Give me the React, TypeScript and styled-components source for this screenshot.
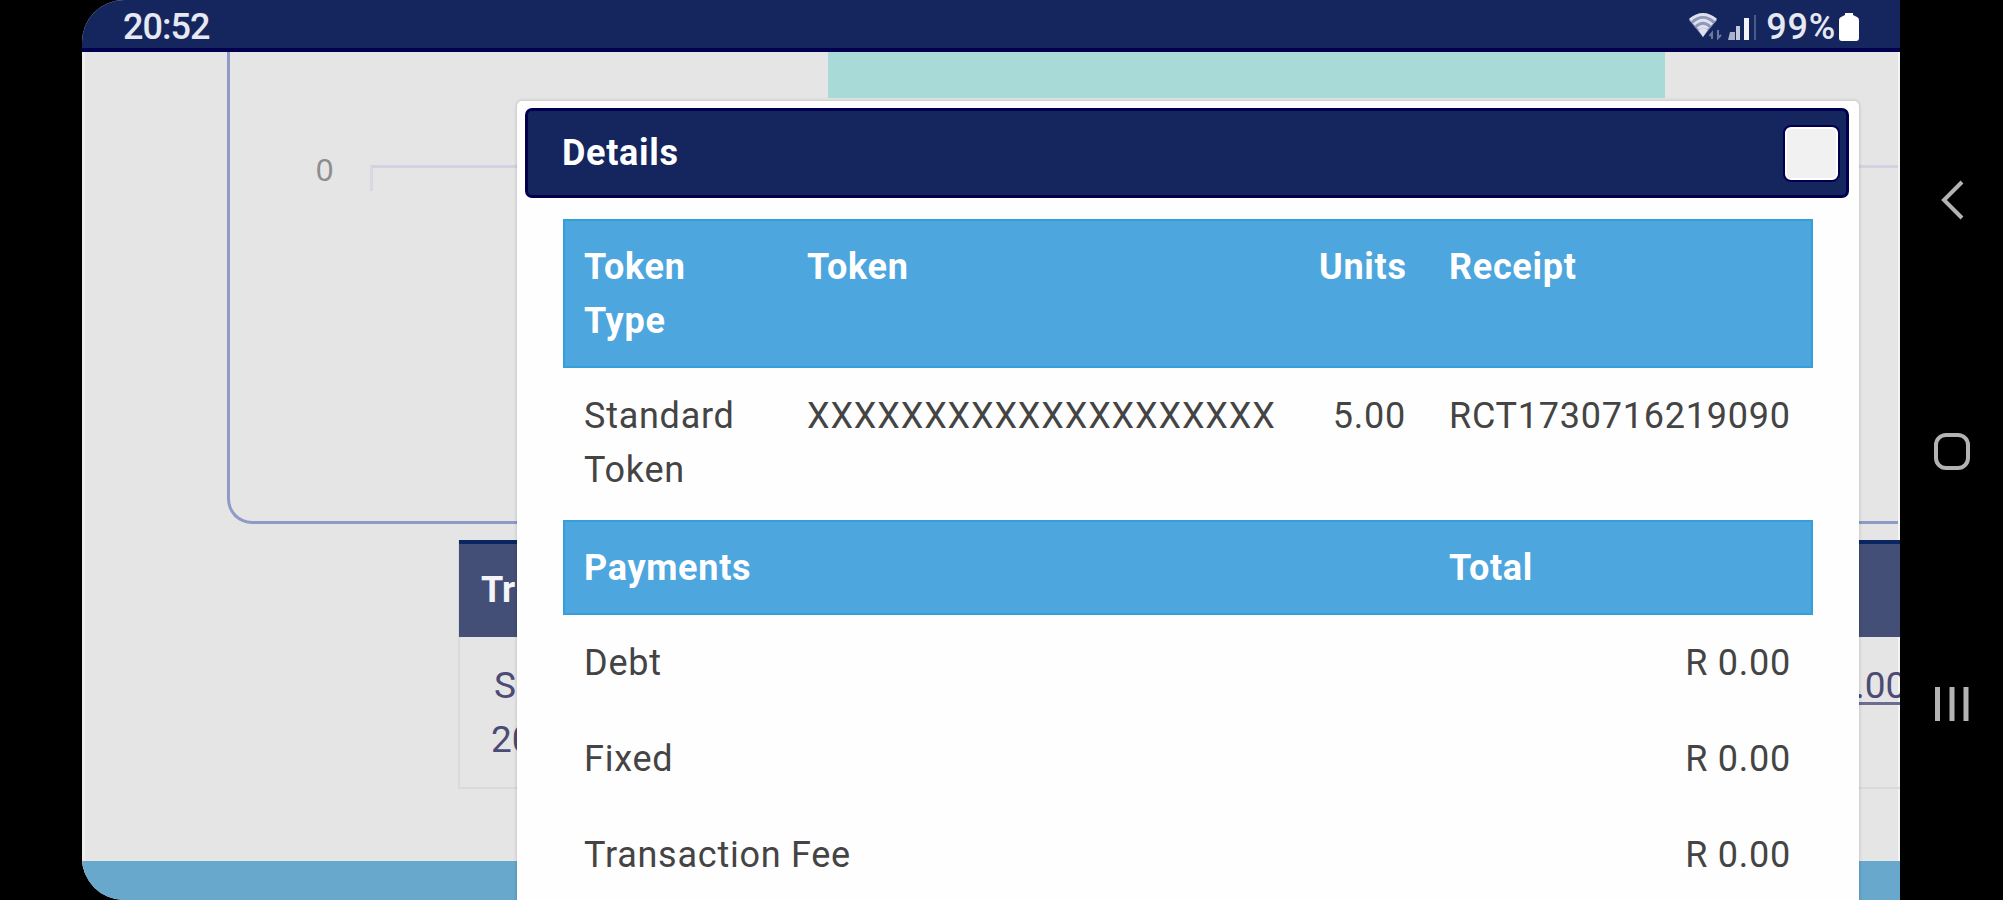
import styled, { createGlobalStyle } from 'styled-components';

const GlobalStyle = createGlobalStyle`
  * { box-sizing: border-box; }
  body {
    margin: 0;
    background: #000;
    font-family: Roboto, "Liberation Sans", sans-serif;
  }
`

const Device = styled.div`
  display: grid;
  grid-template-columns: 1818px 103px;
  padding-left: 82px;
  width: 2003px;
  height: 900px;
  overflow: hidden;
  background: #000;
`

const Screen = styled.div`
  position: relative;
  display: flex;
  flex-direction: column;
  height: 900px;
  overflow: hidden;
  background: #e5e5e5;
  border-radius: 42px 0 0 42px;
`

const StatusBar = styled.header`
  display: flex;
  flex: none;
  align-items: center;
  justify-content: space-between;
  height: 52px;
  padding: 5px 41px 0 41px;
  background: #15265f;
  border-bottom: 4px solid #00004f;
  color: #e6e8f2;
`

const Clock = styled.span`
  font-size: 36px;
  font-weight: 500;
  line-height: 46px;
  letter-spacing: -1px;
`

const StatusIcons = styled.div`
  display: flex;
  align-items: center;
`

const Percent = styled.span`
  font-size: 36px;
  font-weight: 500;
  line-height: 46px;
  letter-spacing: 0.8px;
  margin: 0 3px 0 8px;
`

const Page = styled.main`
  display: flex;
  flex: 1;
  flex-direction: column;
  border-left: 3px solid #eee;
  border-right: 2px solid #f4f4f4;
`

const ChartCard = styled.section`
  display: flex;
  flex: none;
  flex-direction: column;
  height: 472px;
  margin-left: 142px;
  border: solid #8f9ac6;
  border-width: 0 0 3px 3px;
  border-bottom-left-radius: 25px;
`

const Bar = styled.div`
  width: 837px;
  height: 46px;
  margin-left: 598px;
  background: #a8dad8;
`

const Axis = styled.div`
  display: flex;
  margin: 56px 0 0 86px;
`

const AxisLabel = styled.span`
  width: 54px;
  font-family: "Liberation Sans", sans-serif;
  font-size: 31px;
  line-height: 34px;
  color: #8d8d8d;
`

const AxisLine = styled.div`
  flex: 1;
  height: 26px;
  margin-top: 11px;
  border-top: 3px solid #d2d2e2;
  border-left: 3px solid #d8d8e2;
`

const History = styled.section`
  flex: none;
  width: 1600px;
  height: 249px;
  margin: 16px 0 0 373px;
  border: 2px solid #dadada;
  border-top: 0;
`

const HistoryHead = styled.div`
  height: 97px;
  margin-left: -1px;
  padding-left: 22px;
  background: #434f76;
  border-top: 4px solid #0a2560;
  color: #f3f5fa;
  font-size: 36px;
  font-weight: 700;
  line-height: 92px;
`

const HistoryRow = styled.div`
  display: flex;
  padding-top: 22px;
  color: #4b4b75;
  font-size: 37px;
  line-height: 54px;
`

const HistoryDate = styled.div`
  width: 1395px;
  padding-left: 31px;
  span { display: block; }
  span:first-child { padding-left: 3px; }
`

const HistoryAmount = styled.span`
  height: 46px;
  border-bottom: 3px solid #6a6d91;
`

const Footer = styled.footer`
  flex: none;
  height: 40px;
  margin: 72px -2px 0 -3px;
  background: #68a8cc;
`

const Modal = styled.div`
  position: absolute;
  top: 101px;
  left: 435px;
  width: 1342px;
  height: 820px;
  padding: 7px 10px 0 8px;
  background: #fefefe;
  border-radius: 5px 5px 0 0;
  box-shadow: 0 0 3px 1px rgba(0, 0, 0, 0.12);
`

const ModalHeader = styled.div`
  display: flex;
  align-items: center;
  justify-content: space-between;
  height: 90px;
  padding: 0 8px 0 34px;
  background: #15265f;
  border: 3px solid #00004f;
  border-radius: 7px;
`

const ModalTitle = styled.h2`
  margin: 0;
  color: #fff;
  font-size: 36px;
  font-weight: 700;
  line-height: 54px;
  letter-spacing: 0.7px;
`

const CloseButton = styled.button`
  width: 53px;
  height: 53px;
  padding: 0;
  background: #f1f1f1;
  border: 2px solid #fff;
  border-radius: 6px;
  box-shadow: 0 0 0 2px #00004f;
`

const Table = styled.table`
  width: 1250px;
  margin: 21px 0 0 38px;
  border-collapse: collapse;
  table-layout: fixed;
`

const Row = styled.tr<{ $head?: boolean; $height: number }>`
  height: ${p => p.$height}px;
  background: ${p => (p.$head ? '#4da6dd' : 'transparent')};
  box-shadow: ${p => (p.$head ? 'inset 0 0 0 2px #349fd8' : 'none')};
`

const Cell = styled.td<{ $right?: boolean; $spacing?: number }>`
  padding: 21px 22px 0 21px;
  vertical-align: top;
  text-align: ${p => (p.$right ? 'right' : 'left')};
  color: #444;
  font-size: 36px;
  font-weight: 400;
  line-height: 54px;
  letter-spacing: ${p => p.$spacing ?? 0.75}px;
  white-space: nowrap;
`

const HeadCell = styled(Cell).attrs({ as: 'th' })`
  color: #fff;
  font-weight: 700;
  letter-spacing: 0.7px;
`

const NavBar = styled.nav`
  display: flex;
  flex-direction: column;
  align-items: center;
  padding-top: 180px;
`

const NavIcon = styled.svg<{ $gap?: number }>`
  display: block;
  flex: none;
  margin-top: ${p => p.$gap ?? 0}px;
  fill: none;
  stroke: #b3b3b3;
  stroke-width: 4;
`

const payments = [
  { name: 'Debt', total: 'R 0.00' },
  { name: 'Fixed', total: 'R 0.00' },
  { name: 'Transaction Fee', total: 'R 0.00' },
]

const StatusGlyphs = () => (
  <svg width="70" height="30" viewBox="0 0 70 30">
    <path d="M1 8 Q15 -4 29 8 L15 25Z" fill="#8f98b8" />
    <g fill="none" stroke="#dfe2ee" strokeWidth="3">
      <path d="M2 8 Q15 -3 28 8" />
      <path d="M6 12.5 Q15 4 24 12.5" />
      <path d="M10 16.5 Q15 12 20 16.5" />
    </g>
    <path d="M10.5 18 L15 25 L19.5 18 Q15 14 10.5 18Z" fill="#dfe2ee" />
    <path d="M24 27v-6l-2.500 3M30 18v8l3-3" fill="none" stroke="#6d789f" strokeWidth="2" />
    <path d="M42 20h5v8h-7z" fill="#a9b0c9" />
    <path d="M48 14h4v14h-4z" fill="#c3c8da" />
    <path d="M56 6h5v22h-5z" fill="#f4f5fa" />
    <path d="M66 3h2v25h-2z" fill="#4c5983" />
  </svg>
)

const Battery = () => (
  <svg width="20" height="28" viewBox="0 0 20 28">
    <path d="M6 0h8v2l4 2q2 1 2 3v18q0 3-3 3H3q-3 0-3-3V7q0-2 2-3l4-2z" fill="#fff" />
  </svg>
)

const App = () => {
  return (
    <>
      <GlobalStyle />
      <Device>
        <Screen>
          <StatusBar>
            <Clock>20:52</Clock>
            <StatusIcons>
              <StatusGlyphs />
              <Percent>99%</Percent>
              <Battery />
            </StatusIcons>
          </StatusBar>
          <Page>
            <ChartCard>
              <Bar />
              <Axis>
                <AxisLabel>0</AxisLabel>
                <AxisLine />
              </Axis>
            </ChartCard>
            <History>
              <HistoryHead>Tr</HistoryHead>
              <HistoryRow>
                <HistoryDate>
                  <span>S</span>
                  <span>20</span>
                </HistoryDate>
                <HistoryAmount>.00</HistoryAmount>
              </HistoryRow>
            </History>
            <Footer />
          </Page>

          <Modal role="dialog">
            <ModalHeader>
              <ModalTitle>Details</ModalTitle>
              <CloseButton aria-label="Close" />
            </ModalHeader>
            <Table>
              <colgroup>
                <col width="223" />
                <col width="512" />
                <col width="130" />
                <col width="385" />
              </colgroup>
              <tbody>
                <Row $head $height={149}>
                  <HeadCell>Token<br />Type</HeadCell>
                  <HeadCell>Token</HeadCell>
                  <HeadCell $right>Units</HeadCell>
                  <HeadCell>Receipt</HeadCell>
                </Row>
                <Row $height={152}>
                  <Cell>Standard<br />Token</Cell>
                  <Cell $spacing={0.86}>XXXXXXXXXXXXXXXXXXXX</Cell>
                  <Cell $right>5.00</Cell>
                  <Cell>RCT1730716219090</Cell>
                </Row>
                <Row $head $height={95}>
                  <HeadCell colSpan={3}>Payments</HeadCell>
                  <HeadCell>Total</HeadCell>
                </Row>
                {payments.map(item => (
                  <Row key={item.name} $height={96}>
                    <Cell colSpan={3}>{item.name}</Cell>
                    <Cell $right>{item.total}</Cell>
                  </Row>
                ))}
              </tbody>
            </Table>
          </Modal>
        </Screen>

        <NavBar>
          <NavIcon width="24" height="40" viewBox="0 0 24 40">
            <path d="M22 2 L4 20 L22 38" />
          </NavIcon>
          <NavIcon $gap={212} width="38" height="40" viewBox="0 0 38 40">
            <rect x="3" y="3" width="32" height="33" rx="10" />
          </NavIcon>
          <NavIcon $gap={214} width="38" height="36" viewBox="0 0 38 36">
            <path d="M4.500 1v34M19 1v34M33 1v34" strokeWidth="5" />
          </NavIcon>
        </NavBar>
      </Device>
    </>
  )
}

export default App
